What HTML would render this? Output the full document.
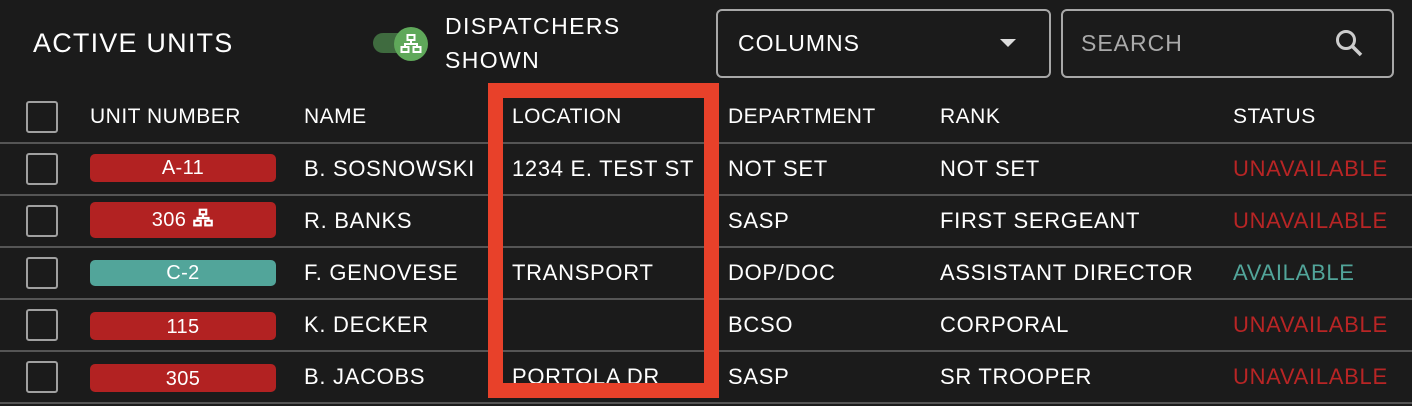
<!DOCTYPE html>
<html><head><style>
body{margin:0;width:1412px;height:406px;background:#1b1b1b;overflow:hidden;font-family:"Liberation Sans",sans-serif;color:#fff;position:relative}
.a{position:absolute;white-space:nowrap}
.t{font-size:22px;letter-spacing:0.7px}
.h{font-size:21px;letter-spacing:0.5px}
.cb{position:absolute;left:26px;width:28px;height:28px;border:2px solid #a0a0a0;border-radius:3px}
.line{position:absolute;left:0;width:1412px;height:2px;background:#555}
.bd{position:absolute;left:90px;width:186px;border-radius:5px;background:#b22222;text-align:center;font-size:20px;color:#fff;letter-spacing:0.4px}
.box{position:absolute;border:2px solid #a8a8a8;border-radius:6px}
.red{color:#b82525}
</style></head><body>
<div class="a" style="left:33px;top:28px;font-size:27px;letter-spacing:1.2px">ACTIVE UNITS</div>
<div class="a" style="left:373px;top:33px;width:36px;height:20px;border-radius:10px;background:#3f6b3f"></div>
<div class="a" style="left:394px;top:27px;width:34px;height:34px;border-radius:17px;background:#5fa85a"></div>
<svg class="a" style="left:399px;top:32px" width="24" height="24" viewBox="0 0 24 24"><g fill="none" stroke="#fff" stroke-width="2"><rect x="8.5" y="3" width="7" height="5"/><rect x="2.5" y="15" width="7" height="5"/><rect x="14.5" y="15" width="7" height="5"/><path d="M12 8v4M6 15v-3h12v3"/></g></svg>
<div class="a" style="left:445px;top:9px;font-size:23px;letter-spacing:1.4px;line-height:34px">DISPATCHERS<br>SHOWN</div>
<div class="box" style="left:716px;top:9px;width:331px;height:65px"></div>
<div class="a" style="left:738px;top:30px;font-size:23px;letter-spacing:1px">COLUMNS</div>
<div class="a" style="left:1000px;top:39px;width:0;height:0;border-left:8px solid transparent;border-right:8px solid transparent;border-top:8px solid #ddd"></div>
<div class="box" style="left:1061px;top:9px;width:329px;height:65px"></div>
<div class="a" style="left:1081px;top:30px;font-size:23px;letter-spacing:1px;color:#aaa">SEARCH</div>
<svg class="a" style="left:1333px;top:27px" width="34" height="34" viewBox="0 0 34 34"><circle cx="13" cy="13" r="8.5" fill="none" stroke="#ccc" stroke-width="3"/><path d="M19 19l9 9" stroke="#ccc" stroke-width="3.5"/></svg>

<div class="cb" style="top:101px"></div>
<div class="a h" style="left:90px;top:105px">UNIT NUMBER</div>
<div class="a h" style="left:304px;top:105px">NAME</div>
<div class="a h" style="left:512px;top:105px">LOCATION</div>
<div class="a h" style="left:728px;top:105px">DEPARTMENT</div>
<div class="a h" style="left:940px;top:105px">RANK</div>
<div class="a h" style="left:1233px;top:105px">STATUS</div>
<div class="line" style="top:142px"></div>

<div class="cb" style="top:153px"></div>
<div class="bd" style="top:154px;height:28px;line-height:29px">A-11</div>
<div class="a t" style="left:304px;top:156px">B. SOSNOWSKI</div>
<div class="a t" style="left:512px;top:156px">1234 E. TEST ST</div>
<div class="a t" style="left:728px;top:156px">NOT SET</div>
<div class="a t" style="left:940px;top:156px">NOT SET</div>
<div class="a t red" style="left:1233px;top:156px">UNAVAILABLE</div>
<div class="line" style="top:194px"></div>

<div class="cb" style="top:205px"></div>
<div class="bd" style="top:202px;height:36px;line-height:36px">306 <svg width="22" height="22" viewBox="0 0 24 24" style="vertical-align:-3px"><g fill="none" stroke="#fff" stroke-width="2.4"><rect x="8.5" y="3" width="7" height="5"/><rect x="2.5" y="15" width="7" height="5"/><rect x="14.5" y="15" width="7" height="5"/><path d="M12 8v4M6 15v-3h12v3"/></g></svg></div>
<div class="a t" style="left:304px;top:208px">R. BANKS</div>
<div class="a t" style="left:728px;top:208px">SASP</div>
<div class="a t" style="left:940px;top:208px">FIRST SERGEANT</div>
<div class="a t red" style="left:1233px;top:208px">UNAVAILABLE</div>
<div class="line" style="top:246px"></div>

<div class="cb" style="top:257px"></div>
<div class="bd" style="top:260px;height:26px;line-height:27px;background:#52a59a">C-2</div>
<div class="a t" style="left:304px;top:260px">F. GENOVESE</div>
<div class="a t" style="left:512px;top:260px">TRANSPORT</div>
<div class="a t" style="left:728px;top:260px">DOP/DOC</div>
<div class="a t" style="left:940px;top:260px">ASSISTANT DIRECTOR</div>
<div class="a t" style="left:1233px;top:260px;color:#52a59a">AVAILABLE</div>
<div class="line" style="top:298px"></div>

<div class="cb" style="top:309px"></div>
<div class="bd" style="top:312px;height:28px;line-height:30px">115</div>
<div class="a t" style="left:304px;top:312px">K. DECKER</div>
<div class="a t" style="left:728px;top:312px">BCSO</div>
<div class="a t" style="left:940px;top:312px">CORPORAL</div>
<div class="a t red" style="left:1233px;top:312px">UNAVAILABLE</div>
<div class="line" style="top:350px"></div>

<div class="cb" style="top:361px"></div>
<div class="bd" style="top:364px;height:28px;line-height:30px">305</div>
<div class="a t" style="left:304px;top:364px">B. JACOBS</div>
<div class="a t" style="left:512px;top:364px">PORTOLA DR</div>
<div class="a t" style="left:728px;top:364px">SASP</div>
<div class="a t" style="left:940px;top:364px">SR TROOPER</div>
<div class="a t red" style="left:1233px;top:364px">UNAVAILABLE</div>
<div class="line" style="top:402px"></div>

<div class="a" style="left:488px;top:83px;width:201px;height:285px;border:15px solid #e8412a"></div>
</body></html>
